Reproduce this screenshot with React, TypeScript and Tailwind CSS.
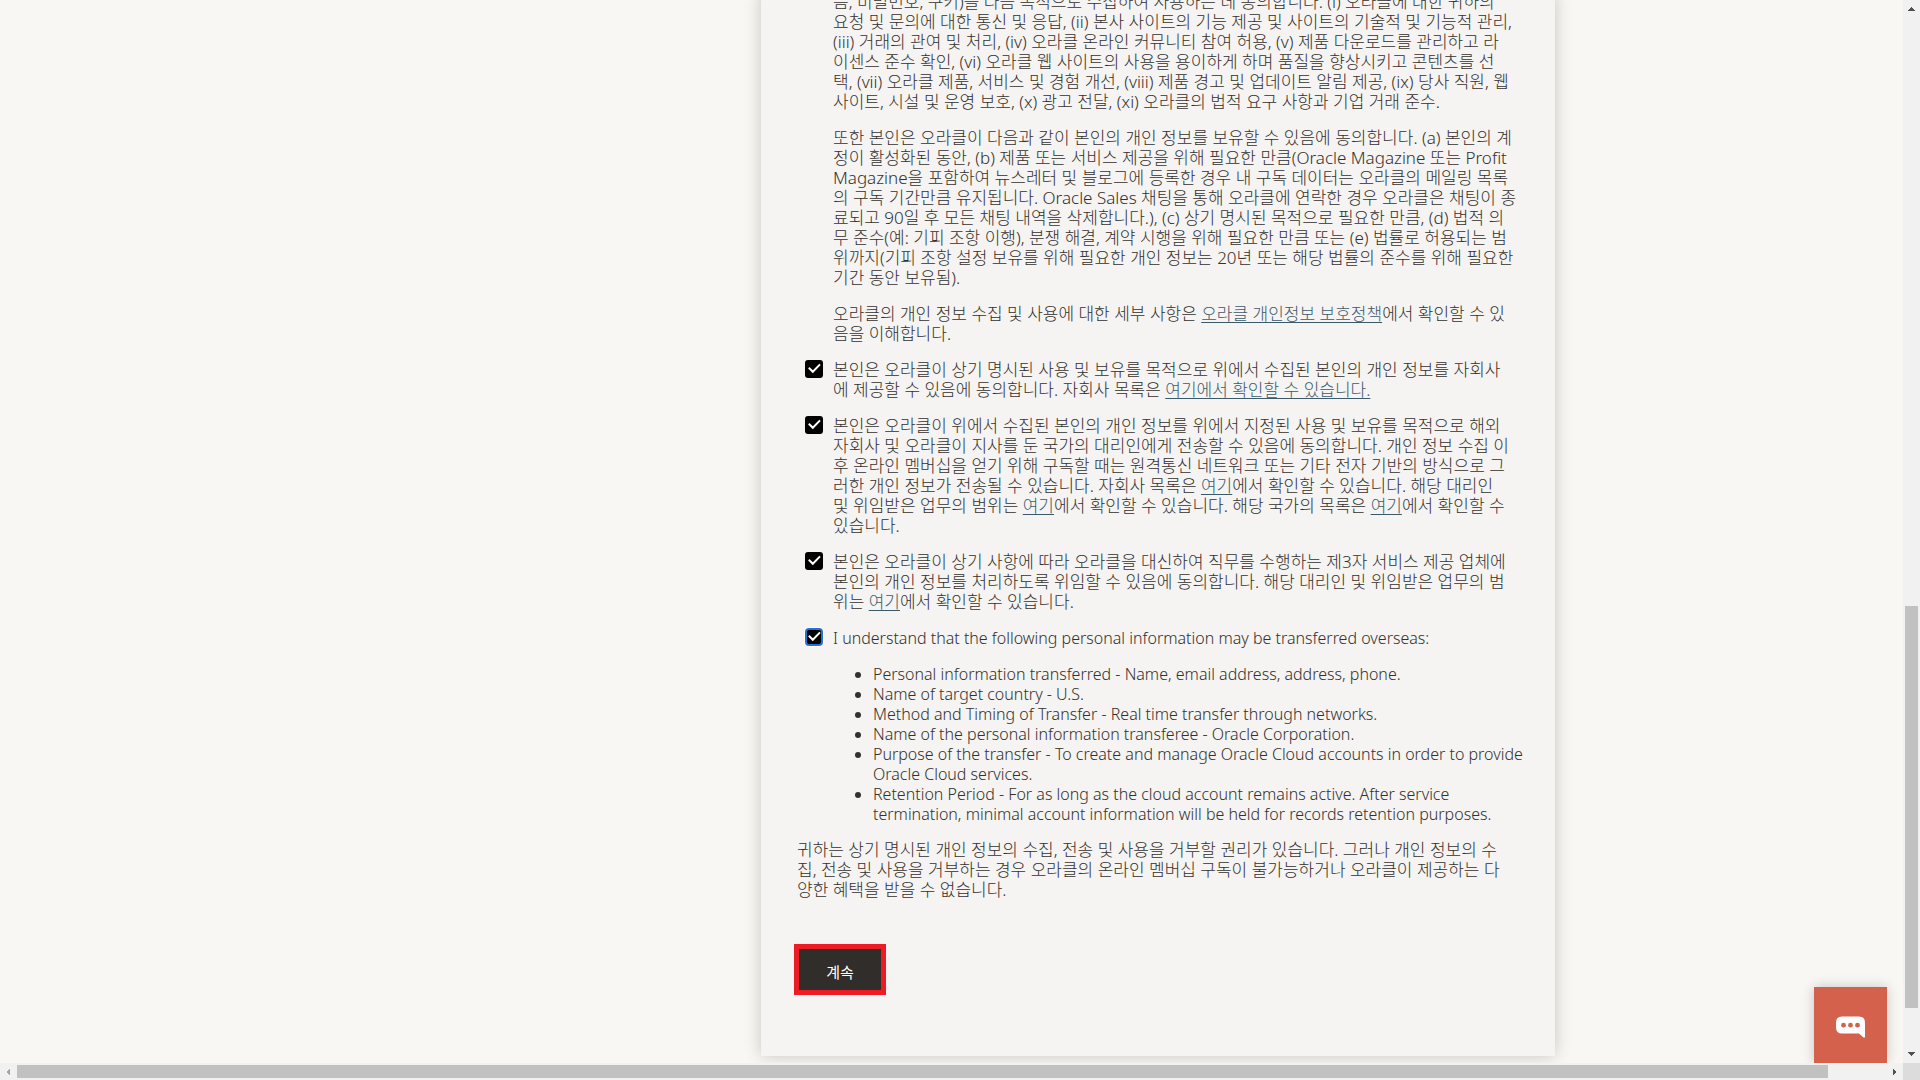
import { useState, type ReactNode } from "react";

const lines = (items: ReactNode[]) =>
  items.map((line, i) => (
    <span key={i} className="block">
      {line}
    </span>
  ));

function Link({ children }: { children: ReactNode }) {
  return (
    <a href="#" className="text-[#3a5a6b] underline decoration-1 underline-offset-2">
      {children}
    </a>
  );
}

function Consent({
  id,
  text,
  focused = false,
}: {
  id: string;
  text: ReactNode[];
  focused?: boolean;
}) {
  const [checked, setChecked] = useState(true);
  return (
    <div className="flex gap-[10px]">
      <span className="grid size-[18px] shrink-0">
        <input
          id={id}
          type="checkbox"
          checked={checked}
          onChange={() => setChecked(!checked)}
          className={
            focused
              ? "col-start-1 row-start-1 size-[18px] appearance-none rounded-[4px] border-2 border-[#2a6fd0] bg-black ring-1 ring-white"
              : "col-start-1 row-start-1 size-[18px] appearance-none rounded-[3px] bg-black"
          }
        />
        <svg
          viewBox="0 0 18 18"
          className="pointer-events-none col-start-1 row-start-1 size-[18px]"
          fill="none"
          stroke="#fff"
          strokeWidth="2"
          aria-hidden="true"
        >
          {checked && <path d="M3.8 7.8 L7.8 11.8 L15 4.4" />}
        </svg>
      </span>
      <label htmlFor={id} className={focused ? "text-base leading-5" : ""}>
        {lines(text)}
      </label>
    </div>
  );
}

const purposes = [
  "름, 비밀번호, 쿠키)을 다음 목적으로 수집하여 사용하는 데 동의합니다. (i) 오라클에 대한 귀하의",
  "요청 및 문의에 대한 통신 및 응답, (ii) 본사 사이트의 기능 제공 및 사이트의 기술적 및 기능적 관리,",
  "(iii) 거래의 관여 및 처리, (iv) 오라클 온라인 커뮤니티 참여 허용, (v) 제품 다운로드를 관리하고 라",
  "이센스 준수 확인, (vi) 오라클 웹 사이트의 사용을 용이하게 하며 품질을 향상시키고 콘텐츠를 선",
  "택, (vii) 오라클 제품, 서비스 및 경험 개선, (viii) 제품 경고 및 업데이트 알림 제공, (ix) 당사 직원, 웹",
  "사이트, 시설 및 운영 보호, (x) 광고 전달, (xi) 오라클의 법적 요구 사항과 기업 거래 준수.",
];

const retention = [
  "또한 본인은 오라클이 다음과 같이 본인의 개인 정보를 보유할 수 있음에 동의합니다. (a) 본인의 계",
  "정이 활성화된 동안, (b) 제품 또는 서비스 제공을 위해 필요한 만큼(Oracle Magazine 또는 Profit",
  "Magazine을 포함하여 뉴스레터 및 블로그에 등록한 경우 내 구독 데이터는 오라클의 메일링 목록",
  "의 구독 기간만큼 유지됩니다. Oracle Sales 채팅을 통해 오라클에 연락한 경우 오라클은 채팅이 종",
  "료되고 90일 후 모든 채팅 내역을 삭제합니다.), (c) 상기 명시된 목적으로 필요한 만큼, (d) 법적 의",
  "무 준수(예: 기피 조항 이행), 분쟁 해결, 계약 시행을 위해 필요한 만큼 또는 (e) 법률로 허용되는 범",
  "위까지(기피 조항 설정 보유를 위해 필요한 개인 정보는 20년 또는 해당 법률의 준수를 위해 필요한",
  "기간 동안 보유됨).",
];

const transfers = [
  ["Personal information transferred - Name, email address, address, phone."],
  ["Name of target country - U.S."],
  ["Method and Timing of Transfer - Real time transfer through networks."],
  ["Name of the personal information transferee - Oracle Corporation."],
  [
    "Purpose of the transfer - To create and manage Oracle Cloud accounts in order to provide",
    "Oracle Cloud services.",
  ],
  [
    "Retention Period - For as long as the cloud account remains active. After service",
    "termination, minimal account information will be held for records retention purposes.",
  ],
];

function Arrow({ className }: { className: string }) {
  return (
    <svg viewBox="0 0 8 4" className={className} fill="currentColor" shapeRendering="crispEdges" aria-hidden="true">
      <path d="M0 4 L3.5 0 H4.5 L8 4 Z" />
    </svg>
  );
}

export default function App() {
  return (
    <div className="grid h-screen grid-cols-[minmax(0,1fr)_17px] grid-rows-[minmax(0,1fr)_17px] overflow-hidden bg-[#f8f7f3] font-['Noto_Sans','Noto_Sans_CJK_KR',sans-serif]">
      <main className="relative grid grid-cols-[761fr_794fr_348fr] items-start overflow-hidden">
        <section className="col-start-2 -mt-2 flex flex-col gap-4 bg-[#f5f4f2] pr-8 pb-[61px] pl-9 text-[17px] leading-5 font-light whitespace-nowrap text-[#33302d] shadow-[0_0_16px_rgba(0,0,0,0.2)]">
          <p className="pl-9">{lines(purposes)}</p>
          <p className="pl-9">{lines(retention)}</p>
          <p className="pl-9">
            {lines([
              <>
                오라클의 개인 정보 수집 및 사용에 대한 세부 사항은 <Link>오라클 개인정보 보호정책</Link>에서 확인할 수 있
              </>,
              "음을 이해합니다.",
            ])}
          </p>
          <div className="flex flex-col gap-4 pl-2">
            <Consent
              id="affiliates"
              text={[
                "본인은 오라클이 상기 명시된 사용 및 보유를 목적으로 위에서 수집된 본인의 개인 정보를 자회사",
                <>
                  에 제공할 수 있음에 동의합니다. 자회사 목록은 <Link>여기에서 확인할 수 있습니다.</Link>
                </>,
              ]}
            />
            <Consent
              id="overseas"
              text={[
                "본인은 오라클이 위에서 수집된 본인의 개인 정보를 위에서 지정된 사용 및 보유를 목적으로 해외",
                "자회사 및 오라클이 지사를 둔 국가의 대리인에게 전송할 수 있음에 동의합니다. 개인 정보 수집 이",
                "후 온라인 멤버십을 얻기 위해 구독할 때는 원격통신 네트워크 또는 기타 전자 기반의 방식으로 그",
                <>
                  러한 개인 정보가 전송될 수 있습니다. 자회사 목록은 <Link>여기</Link>에서 확인할 수 있습니다. 해당 대리인
                </>,
                <>
                  및 위임받은 업무의 범위는 <Link>여기</Link>에서 확인할 수 있습니다. 해당 국가의 목록은 <Link>여기</Link>에서 확인할 수
                </>,
                "있습니다.",
              ]}
            />
            <Consent
              id="third-party"
              text={[
                "본인은 오라클이 상기 사항에 따라 오라클을 대신하여 직무를 수행하는 제3자 서비스 제공 업체에",
                "본인의 개인 정보를 처리하도록 위임할 수 있음에 동의합니다. 해당 대리인 및 위임받은 업무의 범",
                <>
                  위는 <Link>여기</Link>에서 확인할 수 있습니다.
                </>,
              ]}
            />
            <Consent
              id="transfer"
              focused
              text={["I understand that the following personal information may be transferred overseas:"]}
            />
          </div>
          <ul className="list-disc pl-[76px] text-base leading-5">
            {transfers.map((item) => (
              <li key={item[0]}>{lines(item)}</li>
            ))}
          </ul>
          <p>
            {lines([
              "귀하는 상기 명시된 개인 정보의 수집, 전송 및 사용을 거부할 권리가 있습니다. 그러나 개인 정보의 수",
              "집, 전송 및 사용을 거부하는 경우 오라클의 온라인 멤버십 구독이 불가능하거나 오라클이 제공하는 다",
              "양한 혜택을 받을 수 없습니다.",
            ])}
          </p>
          <button
            type="button"
            className="mt-7 -ml-[3px] h-[51px] w-[92px] self-start border-[5px] border-[#ed1c24] bg-[#312d2a] pt-1 text-[15px] font-normal text-white"
          >
            계속
          </button>
        </section>
        <button
          type="button"
          aria-label="Chat"
          className="absolute right-4 bottom-0 flex h-[76px] w-[73px] items-center justify-center bg-[#d4614b] pt-1 shadow-[0_0_12px_rgba(0,0,0,0.2)]"
        >
          <svg viewBox="0 0 29 22" className="h-[22px] w-[29px]" aria-hidden="true">
            <path
              fill="#fff"
              d="M6 0.5 H23 Q29 0.5 29 6.5 V21.5 H27.5 L23 17.5 H6 Q0 17.5 0 11.5 V6.5 Q0 0.5 6 0.5 Z"
            />
            <g fill="#d4614b">
              <circle cx="7.5" cy="9.2" r="2.4" />
              <circle cx="14.5" cy="9.2" r="2.4" />
              <circle cx="21.5" cy="9.2" r="2.4" />
            </g>
          </svg>
        </button>
      </main>

      <div className="flex flex-col items-center bg-[#f1f1f1] py-[7px] text-[#505050]">
        <Arrow className="h-1 w-[7px]" />
        <div className="flex w-full grow flex-col px-[2px]">
          <div className="grow-[595]" />
          <div className="grow-[402] bg-[#c1c1c1]" />
          <div className="grow-[44]" />
        </div>
        <Arrow className="h-1 w-[7px] rotate-180" />
      </div>

      <div className="flex items-center bg-[#f1f1f1] text-[#505050]">
        <span className="flex w-[17px] justify-center">
          <Arrow className="h-1 w-[7px] -rotate-90 text-[#a3a3a3]" />
        </span>
        <div className="h-[13px] grow-[1811] bg-[#c1c1c1]" />
        <div className="grow-[58]" />
        <span className="flex w-[17px] justify-center">
          <Arrow className="h-1 w-[7px] rotate-90" />
        </span>
      </div>
      <div className="bg-[#dcdcdc]" />
    </div>
  );
}
